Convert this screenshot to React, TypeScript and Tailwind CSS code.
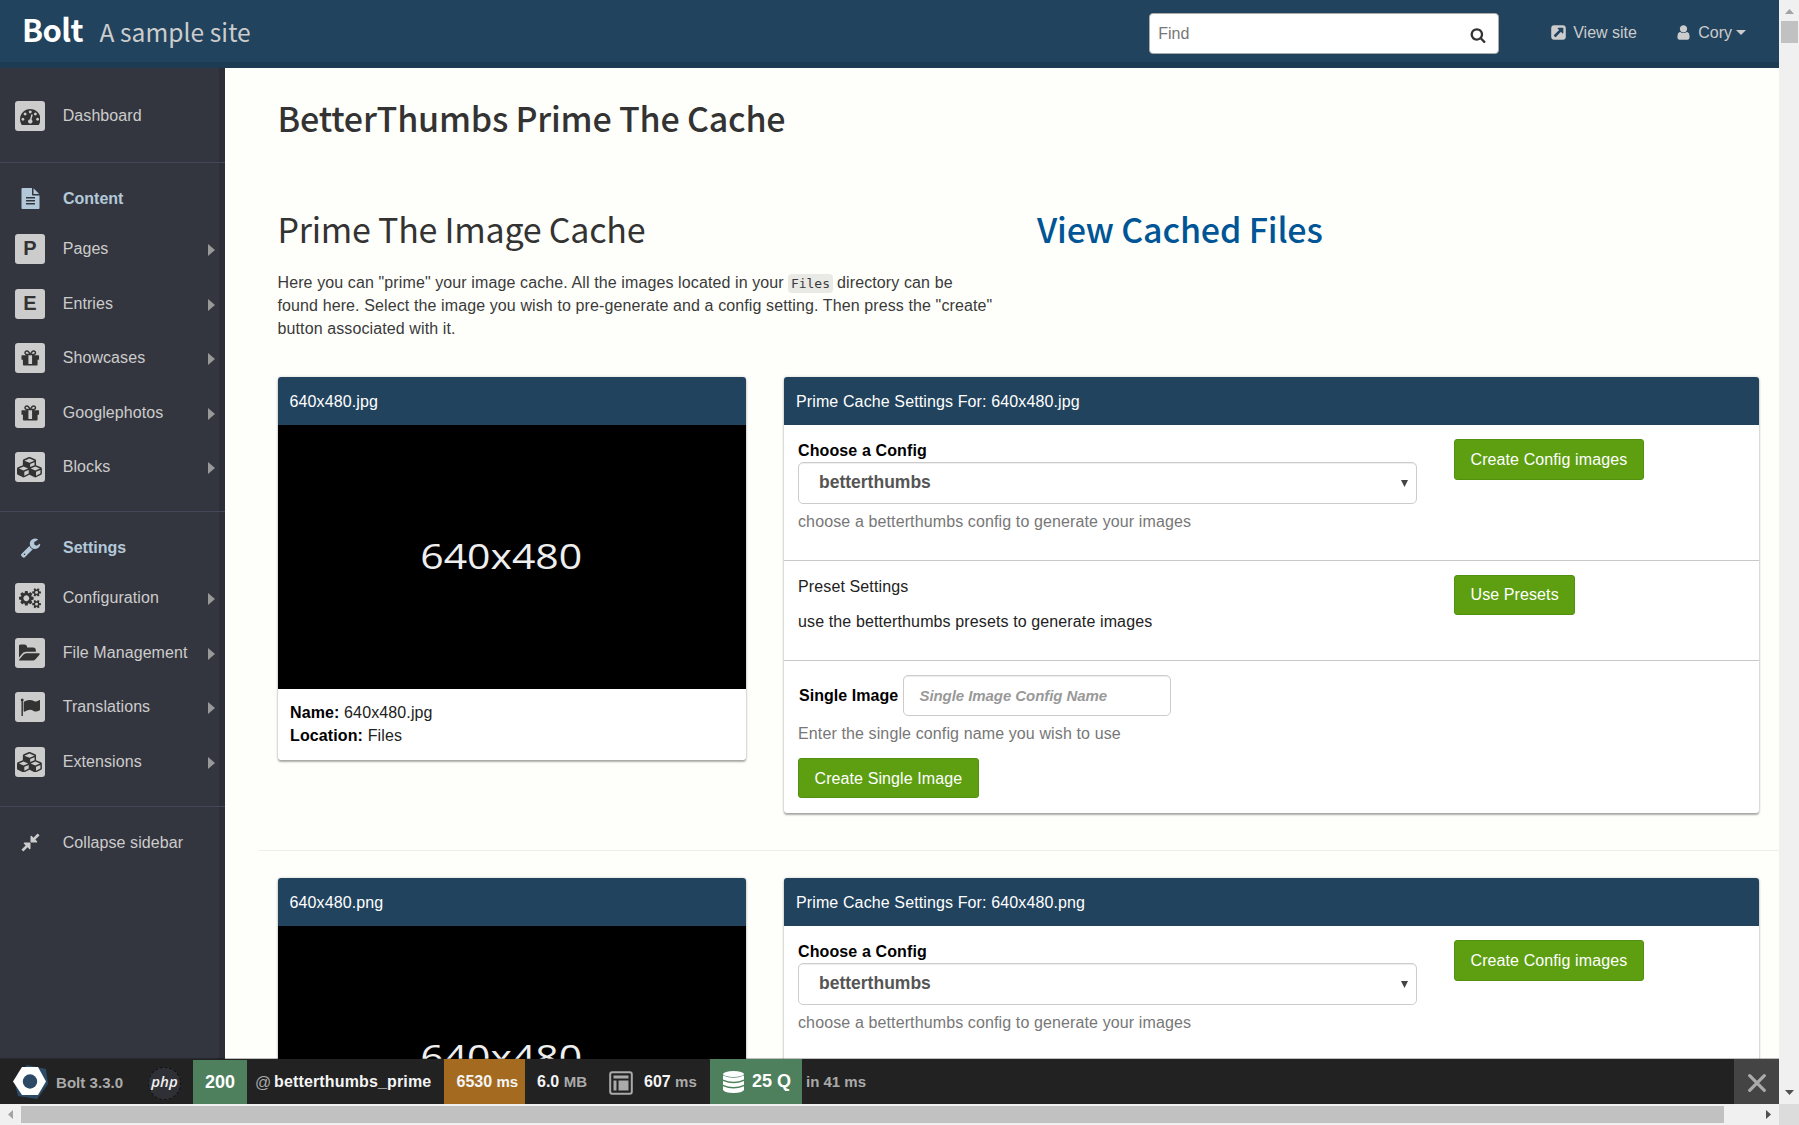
import type { ReactNode } from "react";

type Glyph = { w: number; d: string };

const G: Record<string, Glyph> = {
  dashboard: { w: 1792, d: "M384 1152q0-53-37.5-90.5t-90.5-37.5-90.5 37.5-37.5 90.5 37.5 90.5 90.5 37.5 90.5-37.5 37.5-90.5zm192-448q0-53-37.5-90.5t-90.5-37.5-90.5 37.5-37.5 90.5 37.5 90.5 90.5 37.5 90.5-37.5 37.5-90.5zm428 481l101-382q6-26-7.5-48.5t-38.5-29.5-48 6.5-30 39.5l-101 382q-60 5-107 43.5t-63 98.5q-20 77 20 146t117 89 146-20 89-117q16-60-6-117t-72-91zm660-33q0-53-37.5-90.5t-90.5-37.5-90.5 37.5-37.5 90.5 37.5 90.5 90.5 37.5 90.5-37.5 37.5-90.5zm-640-640q0-53-37.5-90.5t-90.5-37.5-90.5 37.5-37.5 90.5 37.5 90.5 90.5 37.5 90.5-37.5 37.5-90.5zm448 192q0-53-37.5-90.5t-90.5-37.5-90.5 37.5-37.5 90.5 37.5 90.5 90.5 37.5 90.5-37.5 37.5-90.5zm320 448q0 261-141 483-19 29-54 29h-1402q-35 0-54-29-141-221-141-483 0-182 71-348t191-286 286-191 348-71 348 71 286 191 191 286 71 348z" },
  gift: { w: 1792, d: "M1056 1356v-716h-320v716q0 25 18 38.5t46 13.5h192q28 0 46-13.5t18-38.5zm-456-844h195l-126-161q-26-31-69-31-40 0-68 28t-28 68 28 68 68 28zm688-96q0-40-28-68t-68-28q-43 0-69 31l-125 161h194q40 0 68-28t28-68zm376 256v320q0 14-9 23t-23 9h-96v416q0 40-28 68t-68 28h-1088q-40 0-68-28t-28-68v-416h-96q-14 0-23-9t-9-23v-320q0-14 9-23t23-9h440q-93 0-158.5-65.5t-65.5-158.5 65.5-158.5 158.5-65.5q107 0 168 77l128 165 128-165q61-77 168-77 93 0 158.5 65.5t65.5 158.5-65.5 158.5-158.5 65.5h440q14 0 23 9t9 23z" },
  cubes: { w: 2304, d: "M640 1632l384-192v-314l-384 164v342zm-64-454l404-173-404-173-404 173zm1088 454l384-192v-314l-384 164v342zm-64-454l404-173-404-173-404 173zm-448-293l384-165v-266l-384 164v267zm-64-379l441-189-441-189-441 189zm1088 518v416q0 36-19 67t-52 47l-448 224q-25 14-57 14t-57-14l-448-224q-4-2-7-4-2 2-7 4l-448 224q-25 14-57 14t-57-14l-448-224q-33-16-52-47t-19-67v-416q0-38 21.5-70t56.5-48l434-186v-400q0-38 21.5-70t56.5-48l448-192q23-10 50-10t50 10l448 192q35 16 56.5 48t21.5 70v400l434 186q36 16 57 48t21 70z" },
  file: { w: 1792, d: "M1596 476q14 14 28 36h-472v-472q22 14 36 28zm-476 164h544v1056q0 40-28 68t-68 28h-1344q-40 0-68-28t-28-68v-1600q0-40 28-68t68-28h800v544q0 40 28 68t68 28zm160 736v-64q0-14-9-23t-23-9h-704q-14 0-23 9t-9 23v64q0 14 9 23t23 9h704q14 0 23-9t9-23zm0-256v-64q0-14-9-23t-23-9h-704q-14 0-23 9t-9 23v64q0 14 9 23t23 9h704q14 0 23-9t9-23zm0-256v-64q0-14-9-23t-23-9h-704q-14 0-23 9t-9 23v64q0 14 9 23t23 9h704q14 0 23-9t9-23z" },
  wrench: { w: 1792, d: "M448 1472q0-26-19-45t-45-19-45 19-19 45 19 45 45 19 45-19 19-45zm644-420l-682 682q-37 37-90 37-52 0-91-37l-106-108q-38-36-38-90 0-53 38-91l681-681q39 98 114.5 173.5t173.5 114.5zm634-435q0 39-23 106-47 134-164.5 217.5t-258.5 83.5q-185 0-316.5-131.5t-131.5-316.5 131.5-316.5 316.5-131.5q58 0 121.5 16.5t107.5 46.5q16 11 16 28t-16 28l-293 169v224l193 107q5-3 79-48.5t135.5-81 70.5-35.5q15 0 23.5 10t8.5 25z" },
  cogs: { w: 1920, d: "M896 896q0-106-75-181t-181-75-181 75-75 181 75 181 181 75 181-75 75-181zm768 512q0-52-38-90t-90-38-90 38-38 90q0 53 37.5 90.5t90.5 37.5 90.5-37.5 37.5-90.5zm0-1024q0-52-38-90t-90-38-90 38-38 90q0 53 37.5 90.5t90.5 37.5 90.5-37.5 37.5-90.5zm-384 421v185q0 10-7 19.5t-16 10.5l-155 24q-11 35-32 76 34 48 90 115 7 10 7 20 0 12-7 19-23 30-82.5 89.5t-78.5 59.5q-11 0-21-7l-115-90q-37 19-77 31-11 108-23 155-7 24-30 24h-186q-11 0-20-7.5t-10-17.5l-23-153q-34-10-75-31l-118 89q-7 7-20 7-11 0-21-8-144-133-144-160 0-9 7-19 10-14 41-53t47-61q-23-44-35-82l-152-24q-10-1-17-9.5t-7-19.5v-185q0-10 7-19.5t16-10.5l155-24q11-35 32-76-34-48-90-115-7-11-7-20 0-12 7-20 22-30 82-89t79-59q11 0 21 7l115 90q34-18 77-32 11-108 23-154 7-24 30-24h186q11 0 20 7.5t10 17.5l23 153q34 10 75 31l118-89q8-7 20-7 11 0 21 8 144 133 144 160 0 9-7 19-12 16-42 54t-45 60q23 48 34 82l152 23q10 2 17 10.5t7 19.5zm640 533v140q0 16-149 31-12 27-30 52 51 113 51 138 0 4-4 7-122 71-124 71-8 0-46-47t-52-68q-20 2-30 2t-30-2q-14 21-52 68t-46 47q-2 0-124-71-4-3-4-7 0-25 51-138-18-25-30-52-149-15-149-31v-140q0-16 149-31 13-29 30-52-51-113-51-138 0-4 4-7 4-2 35-20t59-34 30-16q8 0 46 46.5t52 67.5q20-2 30-2t30 2q51-71 92-112l6-2q4 0 124 70 4 3 4 7 0 25-51 138 17 23 30 52 149 15 149 31zm0-1024v140q0 16-149 31-12 27-30 52 51 113 51 138 0 4-4 7-122 71-124 71-8 0-46-47t-52-68q-20 2-30 2t-30-2q-14 21-52 68t-46 47q-2 0-124-71-4-3-4-7 0-25 51-138-18-25-30-52-149-15-149-31v-140q0-16 149-31 13-29 30-52-51-113-51-138 0-4 4-7 4-2 35-20t59-34 30-16q8 0 46 46.5t52 67.5q20-2 30-2t30 2q51-71 92-112l6-2q4 0 124 70 4 3 4 7 0 25-51 138 17 23 30 52 149 15 149 31z" },
  folder: { w: 1856, d: "M1815 952q0 31-31 66l-336 396q-43 51-120.5 86.5t-143.5 35.5h-1088q-34 0-60.5-13t-26.5-43q0-31 31-66l336-396q43-51 120.5-86.5t143.5-35.5h1088q34 0 60.5 13t26.5 43zm-343-344v160h-832q-94 0-197 47.5t-164 119.5l-337 396-5 6q0-4-.5-12.5t-.5-12.5v-960q0-92 66-158t158-66h320q92 0 158 66t66 158v32h544q92 0 158 66t66 158z" },
  flag: { w: 1792, d: "M320 256q0 72-64 110v1266q0 13-9.5 22.5t-22.5 9.5h-64q-13 0-22.5-9.5t-9.5-22.5v-1266q-64-38-64-110 0-53 37.5-90.5t90.5-37.5 90.5 37.5 37.5 90.5zm1472 64v763q0 25-12.5 38.5t-39.5 27.5q-215 116-369 116-61 0-123.5-22t-108.5-48-115.5-48-142.5-22q-192 0-464 146-17 9-33 9-26 0-45-19t-19-45v-742q0-32 31-55 21-14 79-43 236-120 421-120 107 0 200 29t219 88q38 19 88 19 54 0 117.5-21t110-47 88-47 54.5-21q26 0 45 19t19 45z" },
  compress: { w: 1792, d: "M896 960v448q0 26-19 45t-45 19-45-19l-144-144-332 332q-10 10-23 10t-23-10l-114-114q-10-10-10-23t10-23l332-332-144-144q-19-19-19-45t19-45 45-19h448q26 0 45 19t19 45zm755-672q0 13-10 23l-332 332 144 144q19 19 19 45t-19 45-45 19h-448q-26 0-45-19t-19-45v-448q0-26 19-45t45-19 45 19l144 144 332-332q10-10 23-10t23 10l114 114q10 10 10 23z" },
  search: { w: 1792, d: "M1216 832q0-185-131.5-316.5t-316.5-131.5-316.5 131.5-131.5 316.5 131.5 316.5 316.5 131.5 316.5-131.5 131.5-316.5zm512 832q0 52-38 90t-90 38q-54 0-90-38l-343-342q-179 124-399 124-143 0-273.5-55.5t-225-150-150-225-55.5-273.5 55.5-273.5 150-225 225-150 273.5-55.5 273.5 55.5 225 150 150 225 55.5 273.5q0 220-124 399l343 343q37 37 37 90z" },
  external: { w: 1792, d: "M1408 928v-480q0-26-19-45t-45-19h-480q-42 0-59 39-17 41 14 70l144 144-534 534q-19 19-19 45t19 45l102 102q19 19 45 19t45-19l534-534 144 144q18 19 45 19 12 0 25-5 39-17 39-59zm256-512v960q0 119-84.5 203.5t-203.5 84.5h-960q-119 0-203.5-84.5t-84.5-203.5v-960q0-119 84.5-203.5t203.5-84.5h960q119 0 203.5 84.5t84.5 203.5z" },
  user: { w: 1792, d: "M1536 1399q0 109-62.5 187t-150.5 78h-854q-88 0-150.5-78t-62.5-187q0-85 8.5-160.5t31.5-152 58.5-131 94-89 134.5-34.5q131 128 313 128t313-128q76 0 134.5 34.5t94 89 58.5 131 31.5 152 8.5 160.5zm-256-887q0 159-112.5 271.5t-271.5 112.5-271.5-112.5-112.5-271.5 112.5-271.5 271.5-112.5 271.5 112.5 112.5 271.5z" },
};

function Icon({ name, size = 21, className = "" }: { name: string; size?: number; className?: string }) {
  const g = G[name];
  return (
    <svg width={(size * g.w) / 1792} height={size} viewBox={`0 0 ${g.w} 1792`} fill="currentColor" className={`shrink-0 ${className}`}>
      <path d={g.d} />
    </svg>
  );
}

function NavItem({ label, icon, letter, arrow = true }: { label: string; icon?: string; letter?: string; arrow?: boolean }) {
  return (
    <div className="flex h-[54.5px] items-center pl-[15px] pr-[10px]">
      <span className="flex size-[30px] items-center justify-center rounded-[3px] bg-[#ccc] text-[20px] font-bold leading-none text-[#333]">
        {letter ? <span className="-mt-[2px]">{letter}</span> : <Icon name={icon!} size={20.5} />}
      </span>
      <span className="ml-[17.7px] flex-1 whitespace-nowrap tracking-[0.08px]">{label}</span>
      {arrow && (
        <svg width="7" height="12" viewBox="0 0 7 12" className="mt-[2px]" fill="#999">
          <path d="M0 0L7 6L0 12Z" />
        </svg>
      )}
    </div>
  );
}

function NavHeading({ label, icon }: { label: string; icon: string }) {
  return (
    <div className="flex h-[48px] items-center pl-[19px] font-bold text-[#b3c9d9]">
      <span className="flex w-[22px] justify-center">
        <Icon name={icon} />
      </span>
      <span className="ml-[22px] mt-[2px]">{label}</span>
    </div>
  );
}

function Sidebar() {
  return (
    <nav className="flex w-[225px] shrink-0 flex-col bg-[#34363f] text-[16px] text-[#ccc] shadow-[inset_-6px_0_0_#2d2e37]">
      <div className="h-[95px] border-b border-[#44475a] pt-[21px]">
        <NavItem label="Dashboard" icon="dashboard" arrow={false} />
      </div>
      <div className="h-[349px] border-b border-[#44475a] pt-[11px]">
        <NavHeading label="Content" icon="file" />
        <NavItem label="Pages" letter="P" />
        <NavItem label="Entries" letter="E" />
        <NavItem label="Showcases" icon="gift" />
        <NavItem label="Googlephotos" icon="gift" />
        <NavItem label="Blocks" icon="cubes" />
      </div>
      <div className="h-[295px] border-b border-[#44475a] pt-[11px]">
        <NavHeading label="Settings" icon="wrench" />
        <NavItem label="Configuration" icon="cogs" />
        <NavItem label="File Management" icon="folder" />
        <NavItem label="Translations" icon="flag" />
        <NavItem label="Extensions" icon="cubes" />
      </div>
      <div className="flex h-[72px] items-center pl-[19px]">
        <span className="flex w-[22px] justify-center">
          <Icon name="compress" className="-mt-[2px]" />
        </span>
        <span className="ml-[21.7px] tracking-[0.08px]">Collapse sidebar</span>
      </div>
    </nav>
  );
}

function Header() {
  return (
    <header className="flex h-[68px] shrink-0 bg-[#21435e] pr-[33px] text-[16px] text-[#ccc] shadow-[inset_0_-6px_0_#1d3b53]">
      <div className="flex flex-1 items-baseline pl-[22px] font-['Noto_Sans_CJK_JP',sans-serif] leading-[57px]">
        <span className="w-[77.500px] text-[31px] font-bold tracking-[-0.6px] text-white">Bolt</span>
        <span className="text-[24.6px] tracking-[0.04px]">A sample site</span>
      </div>
      <div className="mt-[13px] flex h-[41px] w-[350px] items-center justify-between rounded-[4px] border border-[#aaa] bg-white pl-[8px] pr-[12px] text-[#777]">
        <span>Find</span>
        <Icon name="search" size={16} className="mt-[2px] text-[#333]" />
      </div>
      <div className="ml-[51px] flex h-[65px] items-center">
        <Icon name="external" size={17} />
        <span className="ml-[6px] w-[102px]">View site</span>
        <Icon name="user" size={17} />
        <span className="ml-[6px]">Cory</span>
        <svg width="10" height="5" viewBox="0 0 10 5" className="ml-[4px]" fill="currentColor">
          <path d="M0 0H10L5 5Z" />
        </svg>
      </div>
    </header>
  );
}

function Button({ children, className = "h-[40px]" }: { children: ReactNode; className?: string }) {
  return (
    <button className={`block rounded-[3px] border border-[#529010] bg-[#5e9f12] px-[15.5px] tracking-[0.1px] text-white ${className}`}>
      {children}
    </button>
  );
}

const cardShadow = "shadow-[0_2px_2px_rgba(0,0,0,0.3),0_0_3px_rgba(0,0,0,0.18)]";

function Entry({ file }: { file: string }) {
  return (
    <section className="flex items-start pl-[53px] tracking-[0.12px] text-black">
      <div className={`w-[468px] shrink-0 overflow-hidden rounded-[3px] bg-white ${cardShadow}`}>
        <div className="flex h-[48px] items-center bg-[#21435e] pl-[11.5px] pt-[1px] text-white">{file}</div>
        <div className="flex h-[264px] items-center justify-center bg-black pb-[2px] pr-[21px]">
          <span className="scale-x-[1.205] font-['Open_Sans',sans-serif] text-[34px] leading-none tracking-normal text-[#eee]">640x480</span>
        </div>
        <div className="h-[71px] pl-[12px] pt-[12px] leading-[23px] text-[#222]">
          <div><b className="text-black">Name:</b> {file}</div>
          <div><b className="text-black">Location:</b> Files</div>
        </div>
      </div>
      <div className={`ml-[38px] w-[975px] overflow-hidden rounded-[3px] bg-white ${cardShadow}`}>
        <div className="flex h-[48px] items-center bg-[#21435e] pl-[12px] pt-[1px] text-white">Prime Cache Settings For: {file}</div>
        <div className="flex h-[136px] border-b border-[#c8c8c8] pl-[14px] pt-[14px]">
          <div className="w-[619px]">
            <b className="block leading-[23px]">Choose a Config</b>
            <div className="flex h-[42px] items-center justify-between rounded-[5px] border border-[#ccc] pl-[20px] pr-[8px] text-[17.5px] font-bold tracking-normal text-[#555] shadow-[inset_0_1px_1px_rgba(0,0,0,0.075)]">
              <span className="-mt-[1px]">betterthumbs</span>
              <svg width="7" height="7" viewBox="0 0 7 7" fill="#444"><path d="M0 0H7L3.5 7Z" /></svg>
            </div>
            <p className="pt-[6px] leading-[23px] text-[#777]">choose a betterthumbs config to generate your images</p>
          </div>
          <Button className="ml-[37px] h-[41px]">Create Config images</Button>
        </div>
        <div className="flex h-[100px] border-b border-[#c8c8c8] pl-[14px] pt-[14px] text-[#222]">
          <div className="w-[619px] leading-[23px]">
            <p>Preset Settings</p>
            <p className="pt-[12px]">use the betterthumbs presets to generate images</p>
          </div>
          <Button className="ml-[37px] h-[40px]">Use Presets</Button>
        </div>
        <div className="h-[152px] pl-[14px] pt-[14px]">
          <div className="flex items-center">
            <b className="w-[105px] pl-[1px] tracking-[0.05px]">Single Image</b>
            <div className="flex h-[41px] w-[268px] items-center rounded-[5px] border border-[#ccc] pl-[15.5px] pt-[1px] text-[15px] font-bold italic tracking-[-0.07px] text-[#999] shadow-[inset_0_1px_1px_rgba(0,0,0,0.075)]">
              Single Image Config Name
            </div>
          </div>
          <p className="pb-[13px] pt-[6px] leading-[23px] text-[#777]">Enter the single config name you wish to use</p>
          <Button className="h-[40px] pt-[1px]">Create Single Image</Button>
        </div>
      </div>
    </section>
  );
}

function Toolbar() {
  return (
    <footer className="absolute bottom-0 left-0 flex h-[45px] w-full items-center whitespace-nowrap bg-[#222] text-[16px] font-bold leading-none text-[#aaa] shadow-[0_-1px_0_rgba(0,0,0,0.25)]">
      <svg width="36" height="36" viewBox="0 0 36 36" className="ml-[13px]">
        <path d="M14 1L33 5L35 20L24 35L5 32L1 16Z" fill="#2c4a66" />
        <path d="M9 3H25L33 17.5L25 31H9L0 17.5Z" fill="#fff" />
        <circle cx="17" cy="17.5" r="7.2" fill="#2c4a66" />
      </svg>
      <span className="ml-[7px] mt-[2px] w-[92px] text-[15px] tracking-[0.05px]">Bolt 3.3.0</span>
      <span className="mt-[3px] flex size-[33px] items-center justify-center rounded-full border border-dashed border-[#111] bg-[#2f2f36] font-['Open_Sans',sans-serif] text-[15px] font-semibold italic text-[#eee]">
        <span className="-mt-[3px]">php</span>
      </span>
      <span className="ml-[12px] flex h-[44px] w-[54px] items-center justify-center self-end bg-[#4f805d] text-[18px] text-white">200</span>
      <span className="ml-[8px] mt-[2px] w-[19px] text-[16px] font-normal">@</span>
      <span className="w-[170px] tracking-[0.15px] text-[#f5f5f5]">betterthumbs_prime</span>
      <span className="flex h-full w-[81px] items-center bg-[#a46a1f] pl-[12.5px] text-[#f5f5f5]">
        <span className="leading-[20px]">6530<span className="ml-[4.4px] text-[15px]">ms</span></span>
      </span>
      <span className="w-[84px] pl-[12px]">
        <span className="text-[#f5f5f5]">6.0</span>
        <span className="ml-[4.4px] text-[15px]">MB</span>
      </span>
      <svg width="24" height="24" viewBox="0 0 24 24" className="mt-[2px]">
        <rect x="1.2" y="1.2" width="21.6" height="21.6" rx="2" fill="none" stroke="#aaa" strokeWidth="2" />
        <path d="M4.5 4.5H19.5V7.500H4.5ZM4.5 9.500H7.500V19.5H4.5ZM9.500 9.500H19.5V19.5H9.500Z" fill="#aaa" />
      </svg>
      <span className="w-[77px] pl-[11px]">
        <span className="text-[#f5f5f5]">607</span>
        <span className="ml-[4.4px] text-[15px]">ms</span>
      </span>
      <span className="flex h-full w-[92px] items-center bg-[#4f805d] pl-[13px] text-[18px] text-white">
        <svg width="21" height="22" viewBox="0 0 21 22" fill="#fff" className="mr-[8px]">
          <ellipse cx="10.5" cy="3" rx="10.5" ry="3" />
          <path d="M0 4.6Q10.500 9 21 4.600V8.500Q10.500 13 0 8.500ZM0 10Q10.500 14.400 21 10V13.800Q10.500 18.300 0 13.800ZM0 15.300Q10.500 19.700 21 15.300V19Q19 22 10.500 22T0 19Z" />
        </svg>
        <span className="-mt-[2px]">25 Q</span>
      </span>
      <span className="-mt-[1px] flex-1 pl-[4px] text-[15px]">in 41 ms</span>
      <span className="flex h-full w-[45px] items-center justify-center bg-[#444]">
        <svg width="18" height="18" viewBox="0 0 18 18" className="mt-[3px]" stroke="#aaa" strokeWidth="3.200" strokeLinecap="round">
          <path d="M1.700 1.700L16.300 16.300M16.300 1.700L1.700 16.300" />
        </svg>
      </span>
    </footer>
  );
}

export default function App() {
  return (
    <div className="flex h-[1125px] w-[1799px] flex-col overflow-hidden bg-[#f0f0f0] font-['Liberation_Sans',Arial,sans-serif] text-[16px]">
      <div className="flex h-[1104px]">
        <div className="relative flex w-[1779px] flex-col overflow-hidden">
          <Header />
          <div className="flex min-h-0 flex-1">
            <Sidebar />
            <main className="flex-1 bg-[#fefffa] text-[#333]">
              <h1 className="ml-[52.5px] mt-[30px] font-['Noto_Sans_CJK_JP',sans-serif] text-[34px] font-medium leading-[40px] tracking-[-0.2px]">
                BetterThumbs Prime The Cache
              </h1>
              <div className="mt-[71px] flex font-['Noto_Sans_CJK_JP',sans-serif] text-[34px] leading-[40px]">
                <h2 className="ml-[52.5px] w-[759.500px] tracking-[-0.24px]">Prime The Image Cache</h2>
                <h2 className="font-medium tracking-[-0.16px] text-[#005596]">View Cached Files</h2>
              </div>
              <p className="ml-[52.500px] mt-[22px] h-[70px] leading-[23px] tracking-[0.11px] text-[#3a3a3a]">
                Here you can "prime" your image cache. All the images located in your{" "}
                <code className="rounded-[4px] bg-[#e9e9e6] px-[2.500px] py-[2px] font-['DejaVu_Sans_Mono',monospace] text-[13px] leading-none tracking-normal">Files</code> directory can be
                <br />
                found here. Select the image you wish to pre-generate and a config setting. Then press the "create"
                <br />
                button associated with it.
              </p>
              <div className="mt-[36px]">
                <Entry file="640x480.jpg" />
              </div>
              <hr className="mb-[27px] ml-[34px] mt-[37px] border-[#eee]" />
              <Entry file="640x480.png" />
            </main>
          </div>
          <Toolbar />
        </div>
        <div className="flex w-[20px] flex-col items-center justify-between pb-[9px] pt-[9px]">
          <div className="flex flex-col items-center">
            <svg width="9" height="5" viewBox="0 0 9 5" fill="#a3a3a3"><path d="M4.500 0L9 5H0Z" /></svg>
            <div className="mt-[7px] h-[22px] w-[17px] bg-[#c1c1c1]" />
          </div>
          <svg width="9" height="5" viewBox="0 0 9 5" fill="#505050"><path d="M0 0H9L4.500 5Z" /></svg>
        </div>
      </div>
      <div className="flex h-[21px] items-center">
        <svg width="5" height="9" viewBox="0 0 5 9" className="ml-[8px] mr-[8px]" fill="#a3a3a3"><path d="M5 0V9L0 4.500Z" /></svg>
        <div className="h-[17px] w-[1703px] bg-[#c1c1c1]" />
        <svg width="5" height="9" viewBox="0 0 5 9" className="ml-[42px]" fill="#505050"><path d="M0 0V9L5 4.500Z" /></svg>
        <div className="ml-auto h-full w-[20px] bg-[#dcdcdc]" />
      </div>
    </div>
  );
}
